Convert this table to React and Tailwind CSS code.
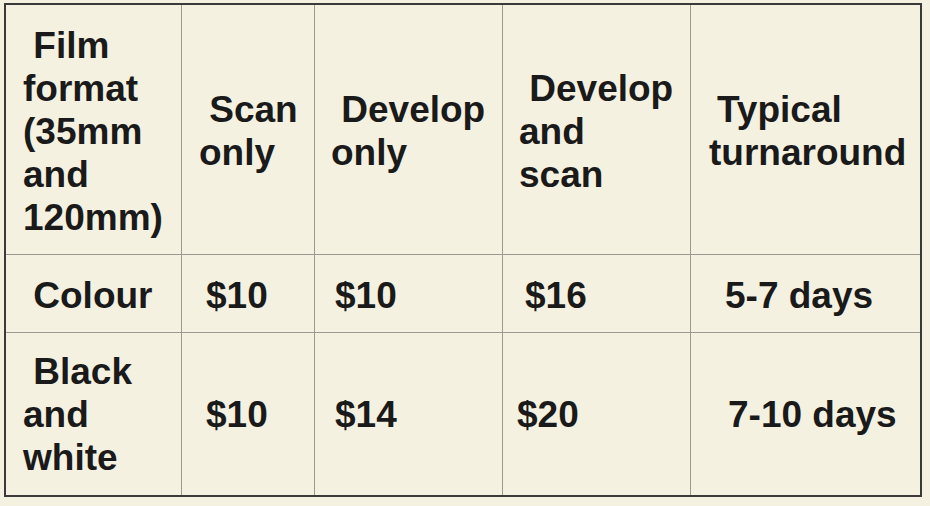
const header = [
  { lines: ['\u00a0Film', 'format', '(35mm', 'and', '120mm)'], pad: 'pl-[17px]' },
  { lines: ['\u00a0Scan', 'only'], pad: 'pl-[17px]' },
  { lines: ['\u00a0Develop', 'only'], pad: 'pl-[16px]' },
  { lines: ['\u00a0Develop', 'and', 'scan'], pad: 'pl-[16px]' },
  { lines: ['Typical', 'turnaround'], pad: 'pl-[18px]', first: 'pl-[8px]' },
]

const rows = [
  {
    height: 'h-[78px]',
    cells: [
      { lines: ['\u00a0Colour'], pad: 'pl-[17px]' },
      { lines: ['$10'], pad: 'pl-[24px]' },
      { lines: ['$10'], pad: 'pl-[20px]' },
      { lines: ['$16'], pad: 'pl-[22px]' },
      { lines: ['5-7 days'], pad: 'pl-[34px]' },
    ],
  },
  {
    height: 'h-[162px]',
    last: true,
    cells: [
      { lines: ['\u00a0Black', 'and', 'white'], pad: 'pl-[17px]' },
      { lines: ['$10'], pad: 'pl-[24px]' },
      { lines: ['$14'], pad: 'pl-[20px]' },
      { lines: ['$20'], pad: 'pl-[14px]' },
      { lines: ['7-10 days'], pad: 'pl-[37px]' },
    ],
  },
]

const Cell = ({ cell, index, last, shift }) => (
  <div
    className={
      'flex flex-col justify-center ' +
      cell.pad +
      ' ' +
      shift +
      (index < 4 ? ' border-r border-[#9b9990]' : '') +
      (last ? '' : ' border-b border-[#9b9990]')
    }
  >
    {cell.lines.map((line, i) => (
      <div key={i} className={'whitespace-pre ' + (i === 0 && cell.first ? cell.first : '')}>
        {line}
      </div>
    ))}
  </div>
)

export default function App() {
  return (
    <div
      className="w-[930px] h-[506px] bg-[#f4f1e1] pl-[4px] pt-[3px] text-[#1a1a1a] font-bold text-[37px] leading-[43px] overflow-hidden"
      style={{ fontFamily: '"Liberation Sans", Arial, sans-serif' }}
    >
      <div className="w-[918px] border-2 border-[#3a3a3a] grid grid-cols-[176px_133px_188px_188px_229px]">
        {header.map((cell, i) => (
          <div key={i} className="h-[250px] flex">
            <Cell cell={cell} index={i} shift="pt-[3px] w-full" />
          </div>
        ))}
        {rows.map((row, r) =>
          row.cells.map((cell, i) => (
            <div key={r + '-' + i} className={row.height + ' flex'}>
              <Cell
                cell={cell}
                index={i}
                last={row.last}
                shift={(row.last ? 'pt-0' : 'pt-[3px]') + ' w-full'}
              />
            </div>
          ))
        )}
      </div>
    </div>
  )
}
